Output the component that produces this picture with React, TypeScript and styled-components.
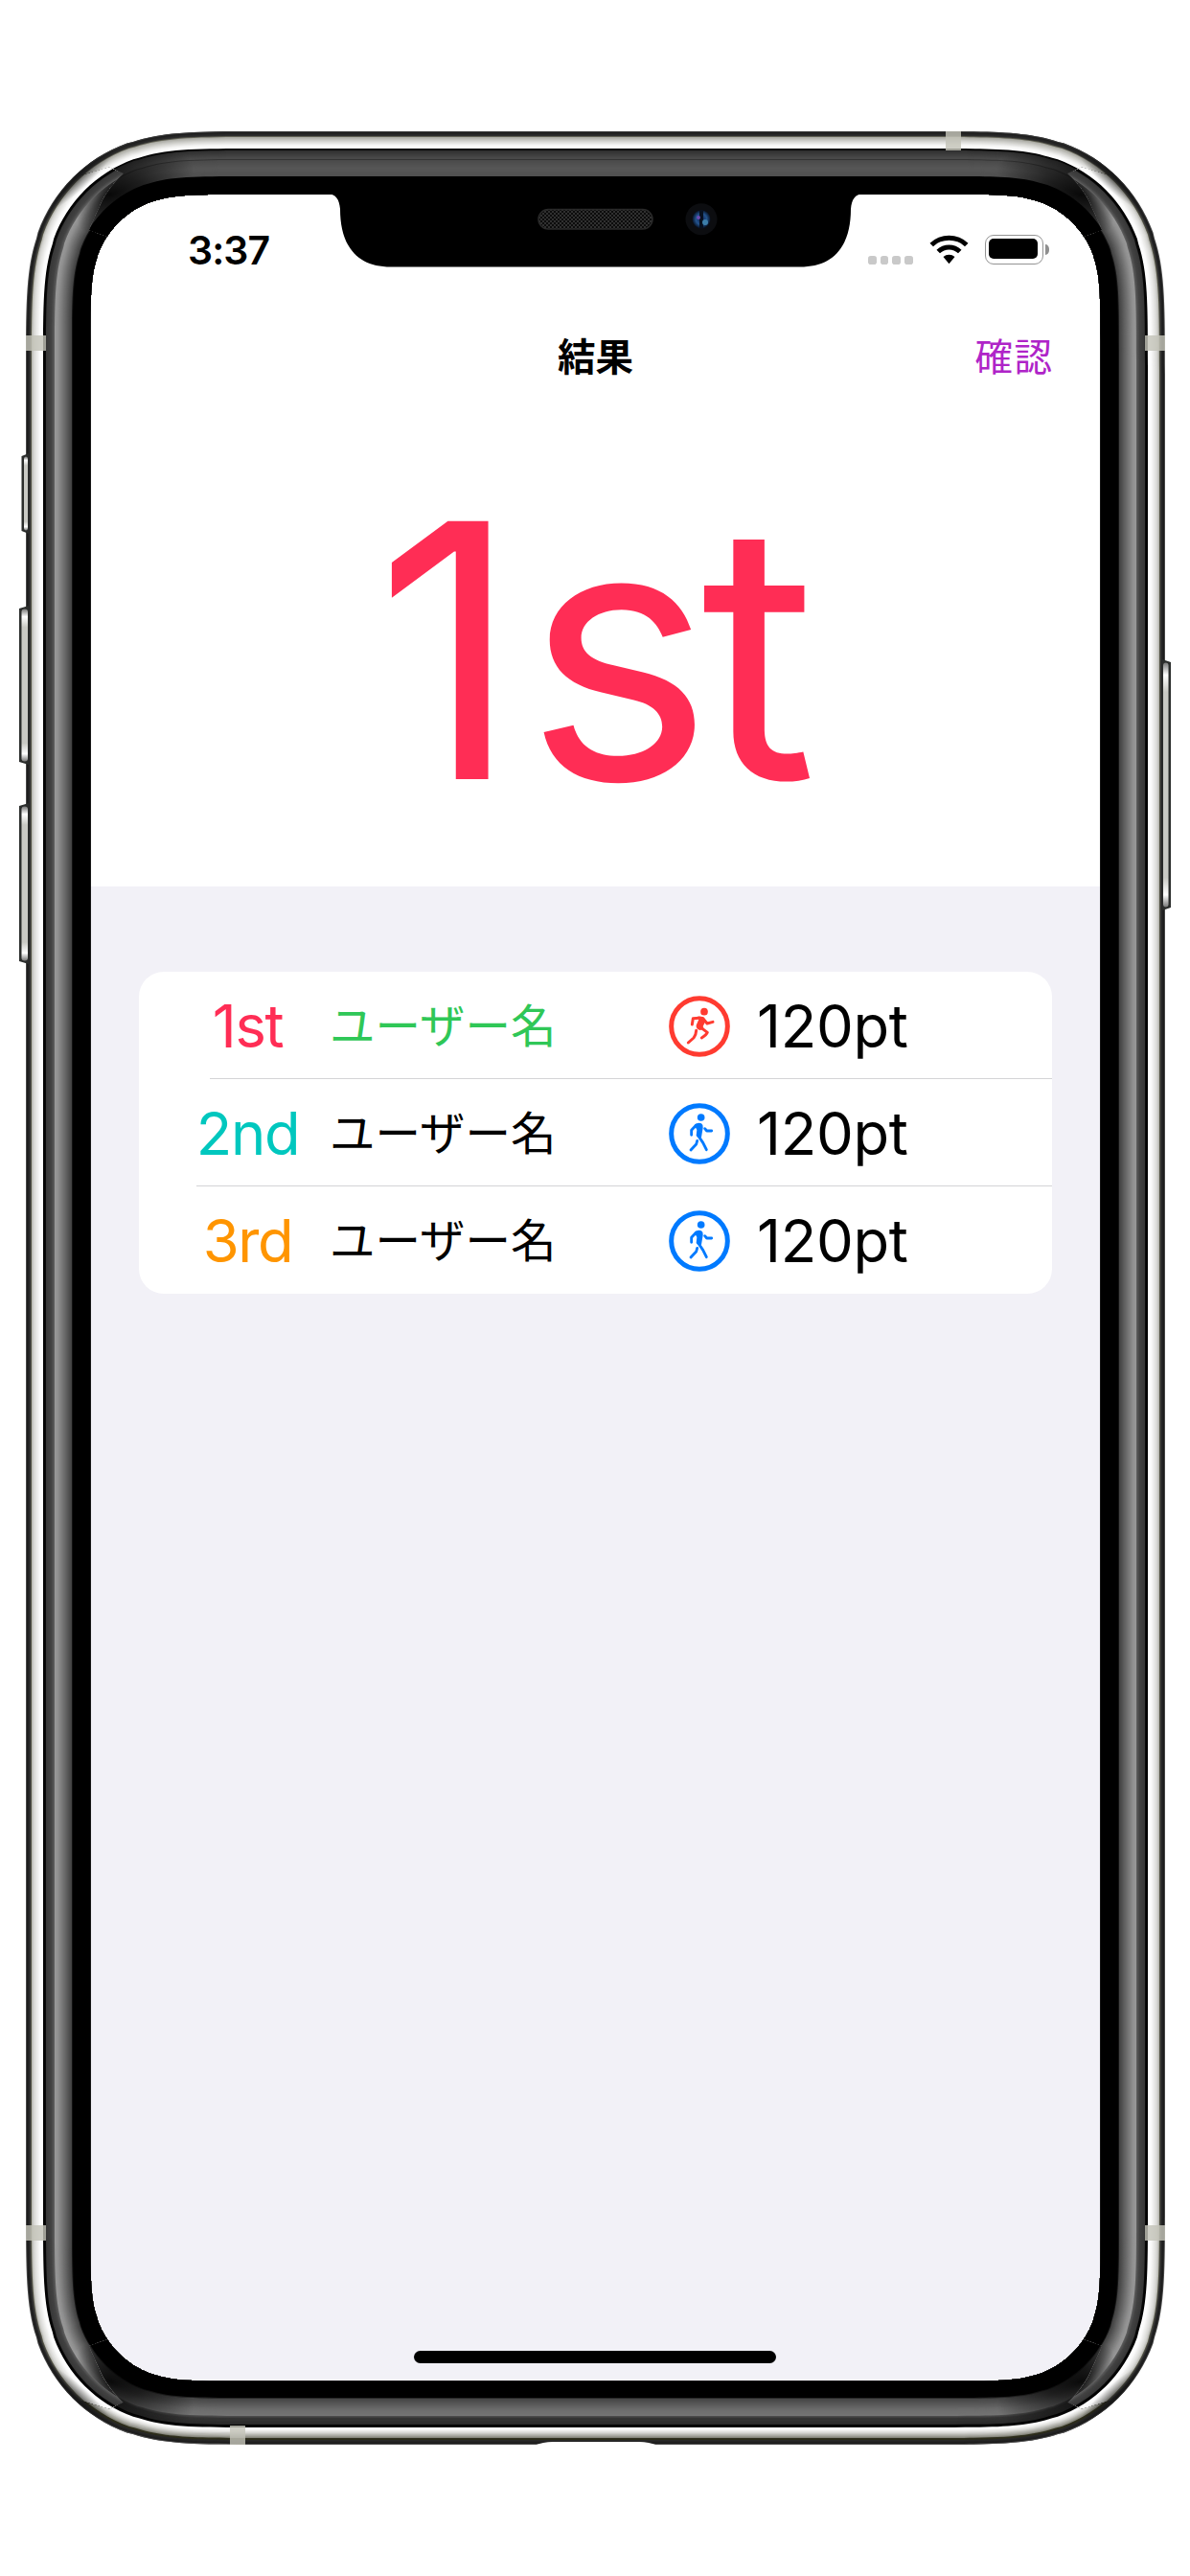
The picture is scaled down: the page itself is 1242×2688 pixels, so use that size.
import React from 'react';
import styled, { createGlobalStyle } from 'styled-components';

const GlobalStyle = createGlobalStyle`
  * { box-sizing: border-box; }
  body { margin: 0; background: #fff; }
`;

const latin = `Inter, "Noto Sans CJK JP", sans-serif`;
const japanese = `"Noto Sans CJK JP", sans-serif`;

/* ---------- page and screen ---------- */

const Page = styled.main`
  position: relative;
  width: 1242px;
  height: 2688px;
  padding: 203px 93px 203px 94px;
  overflow: hidden;
  background: #fff;
  font-family: ${latin};
  color: #000;
`;

const Screen = styled.div`
  display: flex;
  flex-direction: column;
  width: 1055px;
  height: 2282px;
  border-radius: 96px;
  overflow: hidden;
  background: #f2f1f7;
`;

const TopPanel = styled.header`
  display: flex;
  flex-direction: column;
  height: 722px;
  background: #fff;
`;

const StatusBar = styled.div`
  display: flex;
  justify-content: space-between;
  height: 110px;
  padding: 37px 54px 0 102px;
`;

const Clock = styled.span`
  font-size: 41px;
  line-height: 42px;
  font-weight: 600;
  letter-spacing: -0.9px;
`;

const StatusIcons = styled.div`
  display: flex;
  align-items: flex-start;
  padding-top: 5px;
`;

const SignalDots = styled.div`
  display: flex;
  gap: 4px;
  margin: 22px 17px 0 0;
`;

const Dot = styled.i`
  width: 8.8px;
  height: 8.8px;
  border-radius: 2.8px;
  background: #c9c9c9;
`;

const Battery = styled.div`
  display: flex;
  align-items: center;
  gap: 2.5px;
  margin-left: 17px;
`;

const BatteryShell = styled.div`
  width: 61px;
  height: 31px;
  padding: 3.2px;
  border: 1.8px solid #949494;
  border-radius: 9px;
`;

const BatteryLevel = styled.div`
  width: 51px;
  height: 21px;
  border-radius: 5px;
  background: #000;
`;

const BatteryNub = styled.div`
  width: 3.6px;
  height: 10.5px;
  border-radius: 0 4px 4px 0 / 0 5px 5px 0;
  background: #8f8f8f;
`;

const NavBar = styled.nav`
  display: grid;
  grid-template-columns: 1fr auto 1fr;
  align-items: center;
  height: 114px;
  padding: 0 51px;
  font-family: ${japanese};
`;

const NavTitle = styled.h1`
  grid-column: 2;
  margin: 0;
  font-size: 39.5px;
  line-height: 58px;
  font-weight: 700;
`;

const ConfirmButton = styled.button`
  justify-self: end;
  padding: 0;
  border: 0;
  background: none;
  font: 400 39.5px/58px ${japanese};
  letter-spacing: 1.6px;
  margin-right: -1.6px;
  color: #af24c8;
`;

const Hero = styled.div`
  display: flex;
  align-items: center;
  justify-content: center;
  height: 498px;
  padding: 5px 11px 0 0;
  font-size: 370px;
  line-height: 490px;
  color: #ff2d55;
`;

const HeroText = styled.span`
  letter-spacing: -6px;
`;

const HeroSuffix = styled.span`
  margin-left: 12px;
  letter-spacing: -12px;
`;

/* ---------- ranking list ---------- */

const Ranking = styled.ul`
  width: 953px;
  margin: 89px 0 0 51px;
  padding: 0;
  list-style: none;
  border-radius: 26px;
  background: #fff;
`;

const RankingRow = styled.li<{ $line?: number }>`
  display: grid;
  grid-template-columns: 129px 375px 92px 1fr;
  align-items: center;
  height: 112px;
  padding-left: 49px;
  background: ${({ $line }) =>
    $line === undefined
      ? 'none'
      : `linear-gradient(#d4d4d6, #d4d4d6) right bottom / ${953 - $line}px 1.5px no-repeat`};
`;

const Place = styled.span<{ $color: string }>`
  text-align: center;
  font-size: 61.5px;
  line-height: 112px;
  letter-spacing: -1.4px;
  color: ${({ $color }) => $color};
`;

const UserName = styled.span<{ $color: string }>`
  padding-left: 21px;
  font-family: ${japanese};
  font-size: 47.5px;
  line-height: 108px;
  margin-bottom: 5px;
  white-space: nowrap;
  color: ${({ $color }) => $color};
`;

const Points = styled.span`
  font-size: 61.5px;
  line-height: 112px;
  letter-spacing: -0.3px;
`;

const HomeIndicator = styled.div`
  width: 378px;
  height: 13px;
  margin: auto auto 19px 338px;
  border-radius: 7px;
  background: #000;
`;

const DeviceArt = styled.svg`
  position: absolute;
  inset: 0;
  pointer-events: none;
`;

const ActivitySvg = styled.svg`
  display: block;
  margin-top: 1px;
`;

/* ---------- icons ---------- */

const WifiIcon = () => (
  <svg width="41" height="31" viewBox="0 0 123 93">
    <path d="M1.500 26.500A86 86 0 0 1 121.500 26.500L111 37A71 71 0 0 0 12 37Z" />
    <path d="M22.500 47A56 56 0 0 1 100.500 47L90 58A41 41 0 0 0 33 58Z" />
    <path d="M43.500 69A27 27 0 0 1 79.500 69L61.500 91Z" />
  </svg>
);

const ring = <circle cx="96" cy="96" r="88" strokeWidth="15" />;

const RunIcon = () => (
  <ActivitySvg width="64" height="64" viewBox="0 0 192 192" fill="none" stroke="#ff3b30" strokeWidth="9" strokeLinecap="round" strokeLinejoin="round">
    {ring}
    <circle cx="111" cy="50" r="11.500" fill="#ff3b30" stroke="none" />
    <path d="M73 90L76 71L95 70" />
    <path d="M90 65.500Q105 63 111 70L116 78L107 96L110 104L98 108Q84 104 86 92L94 74Z" fill="#ff3b30" stroke="none" />
    <path d="M107 71L120 87L138 82" />
    <path d="M98 98L121 115Q118 123 103 132" />
    <path d="M86 109Q85 124 78 132L61 147" />
  </ActivitySvg>
);

const WalkIcon = () => (
  <ActivitySvg width="64" height="64" viewBox="0 0 192 192" fill="none" stroke="#007aff" strokeWidth="8.500" strokeLinecap="round" strokeLinejoin="round">
    {ring}
    <circle cx="101" cy="45" r="11.500" fill="#007aff" stroke="none" />
    <path d="M71 100V85L86 69" />
    <path d="M80 69Q92 58 102 64Q108 68 107 77L102 107Q92 112 86 102L88 84Z" fill="#007aff" stroke="none" />
    <path d="M113 80L119 87H134" />
    <path d="M92 102L107 124L118 146" />
    <path d="M89 118L86 129L69 147" />
  </ActivitySvg>
);

/* ---------- device drawing ---------- */

// Rounded rectangle whose corners ease continuously into the straight edges.
function squircle(x: number, y: number, w: number, h: number, r: number): string {
  const corner = [1.52866, 1.08849, 0.86841, 0.66993, 0.0655, 0.63149, 0.07491, 0.37282, 0.16906].map(k => k * r);
  const [a, b, c, d, e, f, g, i, j] = corner;
  const R = x + w;
  const B = y + h;
  return [
    `M${x + a} ${y}H${R - a}`,
    `C${R - b} ${y} ${R - c} ${y} ${R - d} ${y + e}L${R - f} ${y + g}`,
    `C${R - i} ${y + j} ${R - j} ${y + i} ${R - g} ${y + f}L${R - e} ${y + d}`,
    `C${R} ${y + c} ${R} ${y + b} ${R} ${y + a}V${B - a}`,
    `C${R} ${B - b} ${R} ${B - c} ${R - e} ${B - d}L${R - g} ${B - f}`,
    `C${R - j} ${B - i} ${R - i} ${B - j} ${R - f} ${B - g}L${R - d} ${B - e}`,
    `C${R - c} ${B} ${R - b} ${B} ${R - a} ${B}H${x + a}`,
    `C${x + b} ${B} ${x + c} ${B} ${x + d} ${B - e}L${x + f} ${B - g}`,
    `C${x + i} ${B - j} ${x + j} ${B - i} ${x + g} ${B - f}L${x + e} ${B - d}`,
    `C${x} ${B - c} ${x} ${B - b} ${x} ${B - a}V${y + a}`,
    `C${x} ${y + b} ${x} ${y + c} ${x + e} ${y + d}L${x + g} ${y + f}`,
    `C${x + j} ${y + i} ${x + i} ${y + j} ${x + f} ${y + g}L${x + d} ${y + e}`,
    `C${x + c} ${y} ${x + b} ${y} ${x + a} ${y}Z`,
  ].join('');
}

type Stop = [number, number];

// Brightness by distance from the outer edge of the body.
const sideTone: Stop[] = [[0, 70], [1, 28], [3, 38], [5, 80], [6, 185], [8, 215], [11, 234], [14, 250], [17, 255], [18, 0], [20, 8], [21, 56], [26, 66], [28, 82], [29, 92], [30, 152], [33, 144], [40, 106], [47, 66], [48, 18], [49, 0]];
const topTone: Stop[] = [[0, 60], [1, 30], [4, 45], [5, 95], [6, 172], [10, 212], [14, 246], [17, 255], [18, 0], [19, 10], [20, 48], [27, 72], [28, 74], [29, 52], [30, 74], [38, 86], [46, 80], [47, 0]];
const bottomTone: Stop[] = [[0, 80], [1, 28], [6, 48], [7, 135], [9, 168], [12, 214], [15, 246], [17, 255], [18, 10], [20, 0], [21, 42], [27, 52], [29, 74], [30, 116], [36, 108], [47, 70], [48, 40], [49, 0]];

function toneAt(stops: Stop[], at: number): string {
  let k = 0;
  while (k < stops.length - 1 && stops[k + 1][0] <= at) k += 1;
  const [p, v] = stops[k];
  const next = stops[k + 1];
  const tone = Math.round(next ? v + ((next[1] - v) * (at - p)) / (next[0] - p) : v);
  const warm = at > 4 && at < 16 ? Math.round((255 - tone) / 12) : 0;
  return `rgb(${tone},${tone},${tone - warm})`;
}

const Shells = ({ stops }: { stops: Stop[] }) => (
  <>
    {Array.from({ length: 50 }, (_, n) => (
      <path key={n} d={squircle(27 + n, 137 + n, 1189 - 2 * n, 2414 - 2 * n, 167 - n)} fill={toneAt(stops, n)} />
    ))}
  </>
);

const corners = [
  { x: 27, y: 137, sx: 1, sy: 1 },
  { x: 1216, y: 137, sx: -1, sy: 1 },
  { x: 27, y: 2551, sx: 1, sy: -1 },
  { x: 1216, y: 2551, sx: -1, sy: -1 },
];

const antennas = [
  [27, 350, 21, 16],
  [1195, 350, 21, 16],
  [27, 2322, 21, 16],
  [1195, 2322, 21, 16],
  [987, 137, 16, 20],
  [240, 2531, 16, 20],
];

const topWedge = 'M0 110L27 137L74 186L114 174L129 181Q115 194 107 209L93 240L150 260H1093L1150 240L1136 209Q1128 194 1114 181L1129 174L1169 186L1216 137L1242 110Z';

const SideButton = ({ x, y, width, height, flip }: { x: number; y: number; width: number; height: number; flip?: boolean }) => (
  <g transform={flip ? `translate(${x + width} ${y}) scale(-1 1)` : `translate(${x} ${y})`}>
    <path d={`M0 3L${width} 0V${height}L0 ${height - 3}Z`} fill="#2b2d2c" />
    <rect x="2.500" y="3.500" width={width - 3.5} height={height - 7} rx="3" fill="url(#key)" />
  </g>
);

const Device = () => (
  <DeviceArt width="1242" height="2688" viewBox="0 0 1242 2688">
    <defs>
      <clipPath id="bezel">
        <path clipRule="evenodd" d={`M0 0H1242V2688H0Z${squircle(94.5, 203, 1054, 2281.5, 100)}`} />
      </clipPath>
      <clipPath id="topEdge">
        <path d={topWedge} />
      </clipPath>
      <clipPath id="bottomEdge">
        <path d={topWedge} transform="translate(0 2688) scale(1 -1)" />
      </clipPath>
      <clipPath id="bothEdges">
        <path d={topWedge} />
        <path d={topWedge} transform="translate(0 2688) scale(1 -1)" />
      </clipPath>
      <clipPath id="body">
        <path d={squircle(27, 137, 1189, 2414, 167)} />
      </clipPath>
      <clipPath id="glass">
        <path d={squircle(47, 157, 1149, 2374, 147)} />
      </clipPath>
      <clipPath id="innerGlass">
        <path d={squircle(57, 167, 1129, 2354, 137)} />
      </clipPath>
      <radialGradient id="shade">
        <stop offset="0" stopColor="#111" stopOpacity="0.65" />
        <stop offset="0.4" stopColor="#111" stopOpacity="0.45" />
        <stop offset="1" stopColor="#111" stopOpacity="0" />
      </radialGradient>
      <radialGradient id="glassShade">
        <stop offset="0" stopColor="#000" stopOpacity="0.9" />
        <stop offset="0.35" stopColor="#000" stopOpacity="0.65" />
        <stop offset="1" stopColor="#000" stopOpacity="0" />
      </radialGradient>
      <linearGradient id="key" x1="0" y1="0" x2="0" y2="1">
        <stop offset="0" stopColor="#777" />
        <stop offset="0.05" stopColor="#fff" />
        <stop offset="0.12" stopColor="#c9c9c4" />
        <stop offset="0.88" stopColor="#c9c9c4" />
        <stop offset="0.95" stopColor="#fff" />
        <stop offset="1" stopColor="#777" />
      </linearGradient>
      <radialGradient id="lens">
        <stop offset="0" stopColor="#102052" />
        <stop offset="0.6" stopColor="#23538c" />
        <stop offset="1" stopColor="#071226" />
      </radialGradient>
      <pattern id="mesh" width="4" height="4" patternUnits="userSpaceOnUse">
        <rect width="4" height="4" fill="#0c0c0c" />
        <path d="M0 0h2v2h-2zM2 2h2v2h-2z" fill="#303030" />
      </pattern>
    </defs>

    <g clipPath="url(#bezel)">
      <Shells stops={sideTone} />
      <g clipPath="url(#innerGlass)">
        {corners.map(({ x, y, sx, sy }) => (
          <ellipse key={`${x}-${y}`} cx="90" cy="62" rx="52" ry="22" fill="url(#glassShade)" transform={`translate(${x} ${y}) scale(${sx} ${sy}) rotate(-52 90 62)`} />
        ))}
      </g>
      <g clipPath="url(#topEdge)"><Shells stops={topTone} /></g>
      <g clipPath="url(#bottomEdge)"><Shells stops={bottomTone} /></g>
      <g clipPath="url(#body)">
        {corners.map(({ x, y, sx, sy }) => (
          <ellipse key={`${x}-${y}`} cx="50" cy="46" rx="62" ry="17" fill="url(#shade)" transform={`translate(${x} ${y}) scale(${sx} ${sy}) rotate(-42 50 46)`} />
        ))}
      </g>
      <g clipPath="url(#bothEdges)">
        <g clipPath="url(#glass)">
          {corners.map(({ x, y, sx, sy }) => (
            <ellipse key={`${x}-${y}`} cx="88" cy="66" rx="92" ry="40" fill="url(#glassShade)" transform={`translate(${x} ${y}) scale(${sx} ${sy}) rotate(-20 88 66)`} />
          ))}
        </g>
      </g>
    </g>

    {antennas.map(([x, y, width, height]) => (
      <rect key={`${x}-${y}`} x={x} y={y} width={width} height={height} fill="#c3c3b8" fillOpacity="0.82" />
    ))}

    <SideButton x={22.5} y={473} width={7.5} height={84} />
    <SideButton x={20} y={632} width={10} height={166} />
    <SideButton x={20} y={838} width={10} height={168} />
    <SideButton x={1213} y={688} width={9} height={262} flip />

    <path d="M557 2552Q567 2548 577 2548H667Q677 2548 687 2552Z" fill="#fff" />

    <path d="M342 202C351 203 354 208 355 218C355 256 372 278.500 408 278.500H835C871 278.500 888 256 888 218C889 208 892 203 901 202Z" fill="#000" />
    <rect x="562" y="218.500" width="119" height="20.500" rx="10.200" fill="url(#mesh)" stroke="#292929" strokeWidth="1.500" />
    <circle cx="732" cy="228.700" r="16.500" fill="#0c0d10" />
    <circle cx="732" cy="228.700" r="9.500" fill="url(#lens)" />
    <path d="M732 219.500V238" stroke="#07101f" strokeWidth="4" />
    <circle cx="729" cy="227" r="2" fill="#6d4bb0" />
    <circle cx="736" cy="232" r="3" fill="#3c7da8" />
  </DeviceArt>
);

/* ---------- app ---------- */

const results = [
  { place: '1st', color: '#ff2d55', nameColor: '#2fc757', running: true, line: 74 },
  { place: '2nd', color: '#00c7be', nameColor: '#000', running: false, line: 60 },
  { place: '3rd', color: '#ff9500', nameColor: '#000', running: false, line: undefined },
];

export default function App() {
  return (
    <Page>
      <GlobalStyle />
      <Screen>
        <TopPanel>
          <StatusBar>
            <Clock>3:37</Clock>
            <StatusIcons>
              <SignalDots>
                <Dot /><Dot /><Dot /><Dot />
              </SignalDots>
              <WifiIcon />
              <Battery>
                <BatteryShell><BatteryLevel /></BatteryShell>
                <BatteryNub />
              </Battery>
            </StatusIcons>
          </StatusBar>
          <NavBar>
            <NavTitle>結果</NavTitle>
            <ConfirmButton>確認</ConfirmButton>
          </NavBar>
          <Hero><HeroText>1<HeroSuffix>st</HeroSuffix></HeroText></Hero>
        </TopPanel>
        <Ranking>
          {results.map(row => (
            <RankingRow key={row.place} $line={row.line}>
              <Place $color={row.color}>{row.place}</Place>
              <UserName $color={row.nameColor}>ユーザー名</UserName>
              {row.running ? <RunIcon /> : <WalkIcon />}
              <Points>120pt</Points>
            </RankingRow>
          ))}
        </Ranking>
        <HomeIndicator />
      </Screen>
      <Device />
    </Page>
  );
}
